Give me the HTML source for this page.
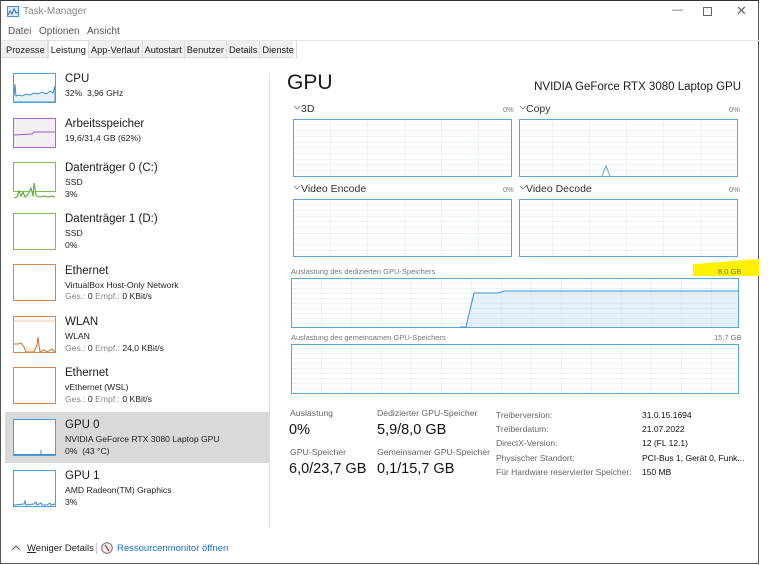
<!DOCTYPE html>
<html><head><meta charset="utf-8"><style>
*{margin:0;padding:0;box-sizing:border-box}
body{width:768px;height:565px;background:#fff;font-family:"Liberation Sans",sans-serif;color:#1a1a1a;position:relative;overflow:hidden}
.win{position:absolute;left:0;top:0;width:759px;height:564px;border:1px solid #555;border-top-color:#333;background:#fff}
.a{position:absolute;white-space:nowrap}
.t{position:absolute;left:12px;width:43px;height:30px;border:1px solid}
.n{position:absolute;left:64px;font-size:11.5px}
.s{position:absolute;left:64px;font-size:8.6px;color:#222}
.g{color:#888}
.lab{font-size:10.5px;color:#333}
.pct{font-size:7.5px;color:#777}
.sl{font-size:8.7px;color:#666}
.sv{font-size:14.5px;color:#111}
.ik{font-size:8.5px;color:#666}
.iv{font-size:8.5px;color:#111}
</style></head><body>
<div class="win">
<svg class="a" style="left:6px;top:5px" width="12" height="11"><rect x="0.5" y="0.5" width="11" height="10" fill="#dbe9f6" stroke="#4a8fcf"/><polyline points="1,9 3,5 5,8 7,3 9,7 11,6" fill="none" stroke="#2a6fb5"/></svg>
<div class="a" style="left:22px;top:5px;font-size:10px;color:#888">Task-Manager</div>
<div class="a" style="left:671px;top:3px;font-size:11px;color:#666">&#8212;</div>
<div class="a" style="left:702px;top:6px;width:9px;height:9px;border:1px solid #666"></div>
<div class="a" style="left:735px;top:2px;font-size:13px;color:#666">&#10005;</div>
<div class="a" style="left:7px;top:25px;font-size:10px;color:#555">Datei</div>
<div class="a" style="left:38px;top:25px;font-size:10px;color:#555">Optionen</div>
<div class="a" style="left:86px;top:25px;font-size:10px;color:#555">Ansicht</div>
<div class="a" style="left:0;top:39px;width:758px;height:1px;background:#e5e5e5"></div>
<div class="a" style="left:0;top:40px;width:292px;height:17px;background:#f0f0f0;border-bottom:1px solid #ddd"></div>
<div class="a" style="left:0;top:40px;font-size:9.3px;display:flex">
<span style="padding:4px 2px 3px 5px;border-right:1px solid #ddd">Prozesse</span>
<span style="padding:4px 2px;background:#fff;border:1px solid #ddd;border-bottom:none;height:18px;margin-top:-1px">Leistung</span>
<span style="padding:4px 2px;border-right:1px solid #ddd">App-Verlauf</span>
<span style="padding:4px 2px;border-right:1px solid #ddd">Autostart</span>
<span style="padding:4px 2px;border-right:1px solid #ddd">Benutzer</span>
<span style="padding:4px 2px;border-right:1px solid #ddd">Details</span>
<span style="padding:4px 2px;border-right:1px solid #ddd">Dienste</span>
</div>
<div class="a" style="left:268px;top:72px;width:1px;height:455px;background:#e0e0e0"></div>

<div class="t" style="top:72px;border-color:#4a9fd6;background:#fff"><svg width="41" height="28"><polyline points="0,22 1,10 2,22 5,21 8,22 12,20 16,21 20,19 24,20 28,18 32,20 36,17 39,19 41,12 41,28 0,28" fill="#e6f1fa" stroke="#3c8ed0"/></svg></div>
<div class="n" style="top:72px">CPU</div><div class="s" style="top:87px">32%&nbsp; 3,96 GHz</div>
<div class="t" style="top:117px;border-color:#b463c8;background:#f4eef5"><svg width="41" height="28"><polyline points="0,16 18,15 20,13 41,13" fill="none" stroke="#a855c0"/></svg></div>
<div class="n" style="top:117px">Arbeitsspeicher</div><div class="s" style="top:132px">19,6/31,4 GB (62%)</div>
<div class="t" style="top:161px;border-color:#7dbf56"><svg width="41" height="36"><polyline points="0,35 3,34 5,28 7,33 9,29 11,34 14,31 17,25 19,33 20,20 22,32 25,34 30,33 34,34 38,33 41,34" fill="#e9f4e1" stroke="#5aa532"/></svg></div>
<div class="n" style="top:161px">Datenträger 0 (C:)</div><div class="s" style="top:176px">SSD</div><div class="s" style="top:188px">3%</div>
<div class="t" style="top:212px;border-color:#7dbf56;height:37px"></div>
<div class="n" style="top:212px">Datenträger 1 (D:)</div><div class="s" style="top:227px">SSD</div><div class="s" style="top:239px">0%</div>
<div class="t" style="top:263px;border-color:#d48a4e;height:37px"></div>
<div class="n" style="top:264px">Ethernet</div><div class="s" style="top:279px">VirtualBox Host-Only Network</div><div class="s" style="top:290px"><span class="g">Ges.:</span> 0 <span class="g">Empf.:</span> 0 KBit/s</div>
<div class="t" style="top:315px;border-color:#d48a4e;height:37px"><svg width="41" height="35"><line x1="0" y1="4" x2="41" y2="4" stroke="#ecc9ad"/><polyline points="0,27 4,27 7,26 10,30 12,35 20,35 23,28 24,20 25,28 26,35 30,33 33,35 38,32 41,35" fill="#fbeee3" stroke="#c8733a"/></svg></div>
<div class="n" style="top:315px">WLAN</div><div class="s" style="top:330px">WLAN</div><div class="s" style="top:342px"><span class="g">Ges.:</span> 0 <span class="g">Empf.:</span> 24,0 KBit/s</div>
<div class="t" style="top:366px;border-color:#d48a4e;height:37px"></div>
<div class="n" style="top:366px">Ethernet</div><div class="s" style="top:381px">vEthernet (WSL)</div><div class="s" style="top:393px"><span class="g">Ges.:</span> 0 <span class="g">Empf.:</span> 0 KBit/s</div>
<div class="a" style="left:4px;top:411px;width:264px;height:51px;background:#d9d9d9"></div>
<div class="t" style="top:418px;border-color:#4a9fd6;background:#fff;height:37px"><svg width="41" height="35"><line x1="27" y1="35" x2="27" y2="30" stroke="#3c8ed0"/><line x1="0" y1="34.5" x2="41" y2="34.5" stroke="#3c8ed0"/></svg></div>
<div class="n" style="top:418px">GPU 0</div><div class="s" style="top:433px">NVIDIA GeForce RTX 3080 Laptop GPU</div><div class="s" style="top:445px">0%&nbsp; (43 °C)</div>
<div class="t" style="top:469px;border-color:#4a9fd6;height:37px"><svg width="41" height="35"><polyline points="0,34 10,33 11,30 12,34 20,33 22,31 23,34 27,32 28,34 33,34 36,32 37,34 41,33" fill="#e6f1fa" stroke="#3c8ed0"/></svg></div>
<div class="n" style="top:469px">GPU 1</div><div class="s" style="top:484px">AMD Radeon(TM) Graphics</div><div class="s" style="top:496px">3%</div>

<div class="a" style="left:286px;top:70px;font-size:21px">GPU</div>
<div class="a" style="right:17px;top:80px;font-size:11.5px">NVIDIA GeForce RTX 3080 Laptop GPU</div>

<svg class="a" style="left:0;top:0" width="758" height="400">
<defs>
<pattern id="p1" x="292" y="118" width="37" height="5.7" patternUnits="userSpaceOnUse"><path d="M0 0H37M0 0V6" stroke="#d5e6f4" stroke-width="1" fill="none"/></pattern>
<pattern id="p2" x="290" y="277" width="30" height="5" patternUnits="userSpaceOnUse"><path d="M0 0H30M0 0V5" stroke="#d5e6f4" stroke-width="1" fill="none"/></pattern>
</defs>
<g stroke="#5da6d6" stroke-width="1">
<rect x="292.5" y="118.5" width="218" height="57" fill="url(#p1)"/>
<rect x="518.5" y="118.5" width="218" height="57" fill="url(#p1)"/>
<rect x="292.5" y="198.5" width="218" height="57" fill="url(#p1)"/>
<rect x="518.5" y="198.5" width="218" height="57" fill="url(#p1)"/>
<rect x="290.5" y="277.5" width="447" height="49" fill="url(#p2)"/>
<rect x="290.5" y="343.5" width="447" height="49" fill="url(#p2)"/>
</g>
<polyline points="601,175 605,165 609,175" fill="none" stroke="#5da6d6"/>
<polygon points="465,326 473,292 497,292 503,290 737,290 737,326" fill="#cfe3f3" fill-opacity="0.5"/>
<polyline points="459,326 465,326 473,292 497,292 503,290 737,290" fill="none" stroke="#3c8ed0"/>
<path d="M293 105l3 3 3-3M519 105l3 3 3-3M293 185l3 3 3-3M519 185l3 3 3-3" stroke="#777" fill="none" stroke-width="0.8"/>
</svg>
<div class="a lab" style="left:300px;top:102px">3D</div><div class="a pct" style="left:502px;top:104px">0%</div>
<div class="a lab" style="left:525px;top:102px">Copy</div><div class="a pct" style="left:728px;top:104px">0%</div>
<div class="a lab" style="left:300px;top:182px">Video Encode</div><div class="a pct" style="left:502px;top:184px">0%</div>
<div class="a lab" style="left:525px;top:182px">Video Decode</div><div class="a pct" style="left:728px;top:184px">0%</div>
<div class="a" style="left:692px;top:258px;width:66px;height:17px;background:#fff200;clip-path:polygon(0 30%,100% 0,100% 100%,0 100%)"></div>
<div class="a" style="left:290px;top:266px;font-size:7.5px;color:#777">Auslastung des dedizierten GPU-Speichers</div><div class="a" style="left:717px;top:266px;font-size:7.5px;color:#777">8,0 GB</div>
<div class="a" style="left:290px;top:332px;font-size:7.5px;color:#777">Auslastung des gemeinsamen GPU-Speichers</div><div class="a" style="left:713px;top:332px;font-size:7.5px;color:#777">15,7 GB</div>

<div class="a sl" style="left:289px;top:407px">Auslastung</div><div class="a sv" style="left:288px;top:421px">0%</div>
<div class="a sl" style="left:376px;top:407px">Dedizierter GPU-Speicher</div><div class="a sv" style="left:376px;top:421px">5,9/8,0 GB</div>
<div class="a sl" style="left:289px;top:446px">GPU-Speicher</div><div class="a sv" style="left:288px;top:460px">6,0/23,7 GB</div>
<div class="a sl" style="left:376px;top:446px">Gemeinsamer GPU-Speicher</div><div class="a sv" style="left:376px;top:460px">0,1/15,7 GB</div>
<div class="a ik" style="left:495px;top:407px;line-height:14.2px">Treiberversion:<br>Treiberdatum:<br>DirectX-Version:<br>Physischer Standort:<br>Für Hardware reservierter Speicher:</div>
<div class="a iv" style="left:641px;top:407px;line-height:14.2px">31.0.15.1694<br>21.07.2022<br>12 (FL 12.1)<br>PCI-Bus 1, Gerät 0, Funk...<br>150 MB</div>

<svg class="a" style="left:10px;top:544px" width="10" height="6"><path d="M1 5l4-4 4 4" fill="none" stroke="#555"/></svg>
<div class="a" style="left:26px;top:542px;font-size:9.5px;color:#222"><u>W</u>eniger Details</div>
<div class="a" style="left:95px;top:542px;width:1px;height:11px;background:#ccc"></div>
<svg class="a" style="left:100px;top:541px" width="12" height="12"><circle cx="6" cy="6" r="5.3" fill="#eee" stroke="#777"/><line x1="4" y1="3" x2="8" y2="9" stroke="#c33" stroke-width="1.3"/></svg>
<div class="a" style="left:116px;top:542px;font-size:9.5px;color:#1a6fc4">Ressourcenmonitor öffnen</div>
</div>
</body></html>
